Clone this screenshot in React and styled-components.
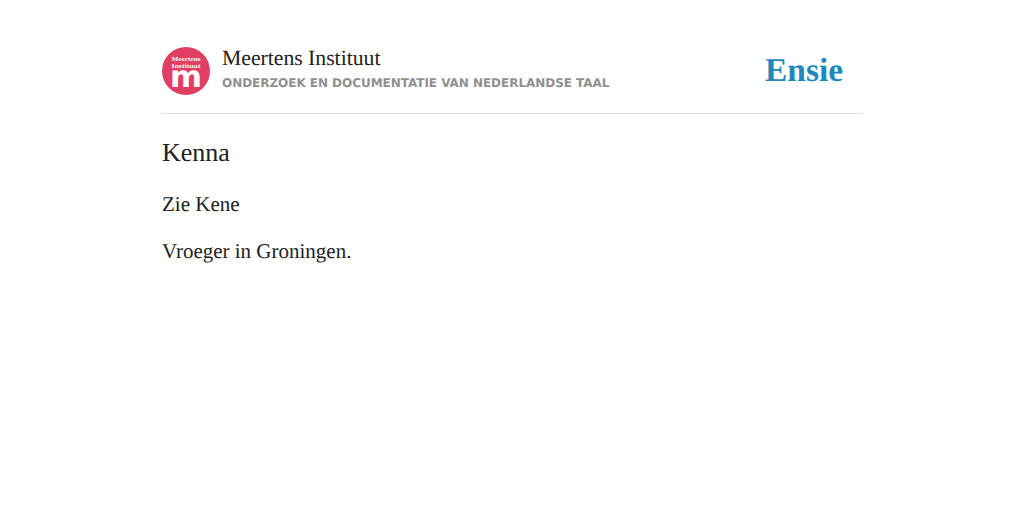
import React from "react";
import styled, { createGlobalStyle } from "styled-components";

const GlobalStyle = createGlobalStyle`
  html, body {
    margin: 0;
    background: #fff;
  }
`;

const serif = `"Liberation Serif", serif`;

const Page = styled.div`
  width: 700px;
  margin: 0 auto;
  padding-top: 47px;
  color: #222;
  font-family: ${serif};
  text-rendering: geometricPrecision;
`;

const Header = styled.header`
  display: flex;
  align-items: flex-start;
  height: 66px;
  border-bottom: 1px solid #ddd;
`;

const Logo = styled.svg`
  display: block;
  width: 48px;
  height: 48px;
  flex: none;
`;

const Titles = styled.div`
  margin-left: 12px;
  flex: 1;
`;

const InstituteName = styled.div`
  font-size: 21.7px;
  line-height: 23px;
`;

const Tagline = styled.div`
  font-family: "DejaVu Sans", sans-serif;
  font-size: 12px;
  font-weight: 700;
  letter-spacing: -0.04px;
  line-height: 16px;
  margin-top: 5px;
  color: #909090;
`;

const Brand = styled.div`
  font-size: 33.4px;
  font-weight: 700;
  line-height: 48px;
  color: #1f88bd;
  margin-right: 19px;
`;

const Title = styled.h1`
  font-size: 26px;
  font-weight: 400;
  line-height: 32px;
  margin: 23px 0 0;
`;

const Paragraph = styled.p`
  font-size: 21px;
  line-height: 28px;
  margin: 19px 0 0;
`;

const Definition = styled(Paragraph)`
  margin-top: 21px;
`;

const MeertensLogo = () => (
  <Logo viewBox="0 0 48 48">
    <defs>
      <clipPath id="disc">
        <circle cx="24" cy="24" r="24" />
      </clipPath>
    </defs>
    <circle cx="24" cy="24" r="24" fill="#e03f63" />
    <g clipPath="url(#disc)" fill="#fff" textAnchor="middle" fontFamily="Liberation Serif, serif" fontWeight="700">
      <text x="24" y="14" fontSize="6.2" textLength="29" lengthAdjust="spacingAndGlyphs">Meertens</text>
      <text x="24" y="20.5" fontSize="6.2" textLength="29" lengthAdjust="spacingAndGlyphs">Instituut</text>
      <text x="24" y="40" fontSize="30" fontFamily="DejaVu Sans, sans-serif" textLength="32" lengthAdjust="spacingAndGlyphs">m</text>
    </g>
  </Logo>
);

export default function App() {
  return (
    <>
      <GlobalStyle />
      <Page>
        <Header>
          <MeertensLogo />
          <Titles>
            <InstituteName>Meertens Instituut</InstituteName>
            <Tagline>ONDERZOEK EN DOCUMENTATIE VAN NEDERLANDSE TAAL</Tagline>
          </Titles>
          <Brand>Ensie</Brand>
        </Header>
        <Title>Kenna</Title>
        <Definition>Zie Kene</Definition>
        <Paragraph>Vroeger in Groningen.</Paragraph>
      </Page>
    </>
  );
}
